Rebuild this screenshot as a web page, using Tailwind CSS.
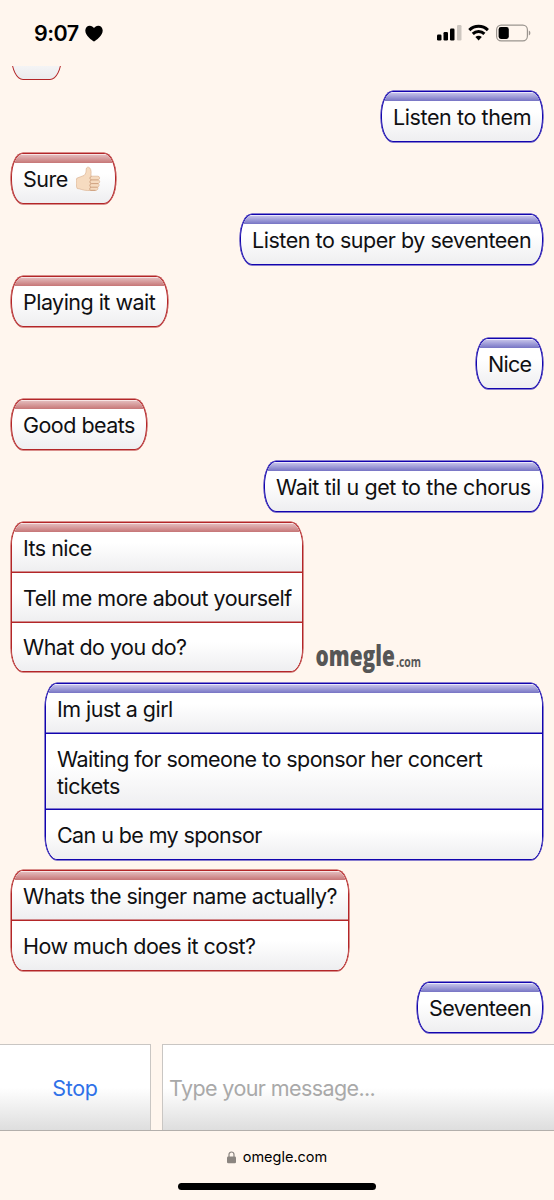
<!DOCTYPE html>
<html lang="en">
<head>
<meta charset="utf-8">
<title>omegle.com</title>
<script src="https://cdn.jsdelivr.net/npm/@tailwindcss/browser@4"></script>
</head>
<body class="w-[554px] h-[1200px] overflow-hidden bg-[#fff6ee] text-[#101012] font-['Inter','Liberation_Sans',sans-serif]">
<div class="relative flex h-[1200px] flex-col">
  <!-- status bar -->
  <header class="flex h-[66px] shrink-0 items-center justify-between pl-[34px] pr-[23px] text-black">
    <div class="flex items-center gap-[6px]">
      <span class="w-[45px] whitespace-nowrap text-[21.5px] font-semibold leading-[26px] tracking-[-0.5px]">9:07</span>
      <svg class="h-[17px] w-[18px]" viewBox="0 0 18 17"><path d="M9 16.6C7 15.500 0.300 10.800 0.300 5.600C0.300 2.700 2.300.7 4.800.7C6.600.7 8.100 1.600 9 3.100C9.900 1.600 11.400.7 13.200.7C15.700.7 17.700 2.700 17.700 5.600C17.700 10.800 11 15.500 9 16.600Z"/></svg>
    </div>
    <svg class="h-[18px] w-[95px]" viewBox="0 0 95 18">
      <rect x="1" y="10.500" width="4.500" height="6" rx="1.200"/>
      <rect x="7.500" y="8" width="4.500" height="8.500" rx="1.200"/>
      <rect x="14" y="4.500" width="4.500" height="12" rx="1.200"/>
      <rect x="21" y="1" width="4.500" height="15.500" rx="1.200" fill="#cdc6bf"/>
      <g fill="none" stroke="#000" stroke-width="3"><path d="M33.300 6.100A13.400 13.400 0 0 1 51.900 6.100"/><path d="M36.800 9.900A8.300 8.300 0 0 1 48.400 9.900"/></g>
      <path d="M39.400 13.100A4.600 4.600 0 0 1 45.800 13.100L42.600 16.500Z"/>
      <rect x="60.600" y="1.100" width="30.800" height="15.800" rx="4.600" fill="none" stroke="#9b958f" stroke-width="1.200"/>
      <rect x="62.600" y="3.100" width="10.200" height="11.800" rx="2.300"/>
      <path d="M92.800 6.500C94.900 7.200 94.900 10.800 92.800 11.500Z" fill="#9b958f"/>
    </svg>
  </header>

  <!-- conversation -->
  <main class="flex h-[978px] shrink-0 flex-col items-start overflow-hidden px-[11px] text-[21.5px] leading-[27px] tracking-[-0.53px]">
    <div class="flex h-[14px] w-[51px] shrink-0 flex-col justify-end overflow-hidden">
      <div class="h-[51px] w-[51px] shrink-0 rounded-[12px/24px] border border-[#b32628] bg-linear-to-b from-white from-40% to-[#ebebed]"></div>
    </div>

    <div class="relative mt-[11px] h-[51px] w-[162px] shrink-0 self-end overflow-hidden rounded-[12px/24px] border border-[#1204ae] bg-linear-to-b from-white from-40% to-[#eeeef0] pl-[11px] pt-[12px] whitespace-nowrap tracking-[-0.4px] shadow-[0_0_0_0.5px_#1204ae]">
      <div class="absolute inset-x-0 top-0 h-[9px] border-t border-[#e9e8fb] bg-linear-to-b from-[#c4c1e8] to-[#7774c4]"></div><span>Listen to them</span>
    </div>
    <div class="relative mt-[11px] flex h-[51px] w-[105px] shrink-0 overflow-hidden rounded-[12px/24px] border border-[#b32628] bg-linear-to-b from-white from-40% to-[#eeeef0] pl-[11px] pt-[12px] whitespace-nowrap shadow-[0_0_0_0.5px_#b32628]">
      <div class="absolute inset-x-0 top-0 h-[9px] border-t border-[#f7e4e4] bg-linear-to-b from-[#e2babb] to-[#c67677]"></div><span class="w-[53px]">Sure</span>
      <svg class="h-[27px] w-[25px]" viewBox="0 0 25 27"><path d="M.8 12.200C3 11 6 10.600 8 9.500C10 7.800 10.200 5.500 10.200 3.200C10.200 1.200 12.200.6 13.600 1.800C15.500 3.600 15.200 7 14.800 10.200H21.800C24 10.200 24.200 13.200 22.500 13.900C24.200 14.500 24 17 22.300 17.600C23.600 18.500 23.300 20.600 21.600 21.200C22.500 22.300 21.700 24.500 19.500 24.500H11.500C7 24.500 4.500 22.700 1.200 22.500C-.1 20.500-.1 14 .8 12.200Z" fill="#f6dbc0" stroke="#dcb593" stroke-width=".7"/><path d="M22.500 13.900H15.500C13.500 13.600 13.500 10.800 15.500 10.300M22.300 17.600H15.200C13.400 17.200 13.500 14.400 15.500 13.900M21.600 21.200H15C13.400 20.800 13.500 18 15.200 17.600M19.500 24.300H14.500C13.300 23.500 13.700 21.500 15 21.200" fill="none" stroke="#c99b78" stroke-width=".9"/></svg>
    </div>
    <div class="relative mt-[10px] h-[51px] w-[303px] shrink-0 self-end overflow-hidden rounded-[12px/24px] border border-[#1204ae] bg-linear-to-b from-white from-40% to-[#eeeef0] pl-[11px] pt-[12px] whitespace-nowrap tracking-[-0.47px] shadow-[0_0_0_0.5px_#1204ae]">
      <div class="absolute inset-x-0 top-0 h-[9px] border-t border-[#e9e8fb] bg-linear-to-b from-[#c4c1e8] to-[#7774c4]"></div><span>Listen to super by seventeen</span>
    </div>
    <div class="relative mt-[11px] h-[51px] w-[157px] shrink-0 overflow-hidden rounded-[12px/24px] border border-[#b32628] bg-linear-to-b from-white from-40% to-[#eeeef0] pl-[11px] pt-[12px] whitespace-nowrap shadow-[0_0_0_0.5px_#b32628]">
      <div class="absolute inset-x-0 top-0 h-[9px] border-t border-[#f7e4e4] bg-linear-to-b from-[#e2babb] to-[#c67677]"></div><span>Playing it wait</span>
    </div>
    <div class="relative mt-[11px] h-[51px] w-[67px] shrink-0 self-end overflow-hidden rounded-[12px/24px] border border-[#1204ae] bg-linear-to-b from-white from-40% to-[#eeeef0] pl-[11px] pt-[12px] whitespace-nowrap tracking-[-0.7px] shadow-[0_0_0_0.5px_#1204ae]">
      <div class="absolute inset-x-0 top-0 h-[9px] border-t border-[#e9e8fb] bg-linear-to-b from-[#c4c1e8] to-[#7774c4]"></div><span>Nice</span>
    </div>
    <div class="relative mt-[10px] h-[51px] w-[136px] shrink-0 overflow-hidden rounded-[12px/24px] border border-[#b32628] bg-linear-to-b from-white from-40% to-[#eeeef0] pl-[11px] pt-[12px] whitespace-nowrap shadow-[0_0_0_0.5px_#b32628]">
      <div class="absolute inset-x-0 top-0 h-[9px] border-t border-[#f7e4e4] bg-linear-to-b from-[#e2babb] to-[#c67677]"></div><span>Good beats</span>
    </div>
    <div class="relative mt-[11px] h-[51px] w-[279px] shrink-0 self-end overflow-hidden rounded-[12px/24px] border border-[#1204ae] bg-linear-to-b from-white from-40% to-[#eeeef0] pl-[11px] pt-[12px] whitespace-nowrap tracking-[-0.39px] shadow-[0_0_0_0.5px_#1204ae]">
      <div class="absolute inset-x-0 top-0 h-[9px] border-t border-[#e9e8fb] bg-linear-to-b from-[#c4c1e8] to-[#7774c4]"></div><span>Wait til u get to the chorus</span>
    </div>

    <div class="relative mt-[10px] h-[150px] w-[292px] shrink-0 overflow-hidden rounded-[12px/24px] border border-[#b32628] whitespace-nowrap shadow-[0_0_0_0.5px_#b32628]">
      <div class="absolute inset-x-0 top-0 h-[9px] border-t border-[#f7e4e4] bg-linear-to-b from-[#e2babb] to-[#c67677]"></div>
      <p class="h-[49px] bg-linear-to-b from-white from-40% to-[#eeeef0] pl-[11px] pt-[12px]">Its nice</p>
      <p class="h-[50px] border-t border-[#b32628] bg-linear-to-b from-white from-40% to-[#eeeef0] pl-[11px] pt-[12px] shadow-[0_-0.5px_0_#b32628]">Tell me more about yourself</p>
      <p class="h-[49px] border-t border-[#b32628] bg-linear-to-b from-white from-40% to-[#eeeef0] pl-[11px] pt-[11px] shadow-[0_-0.5px_0_#b32628]">What do you do?</p>
    </div>
    <div class="relative mt-[11px] h-[177px] w-[498px] shrink-0 self-end overflow-hidden rounded-[12px/24px] border border-[#1204ae] whitespace-nowrap shadow-[0_0_0_0.5px_#1204ae]">
      <div class="absolute inset-x-0 top-0 h-[9px] border-t border-[#e9e8fb] bg-linear-to-b from-[#c4c1e8] to-[#7774c4]"></div>
      <p class="h-[49px] bg-linear-to-b from-white from-40% to-[#eeeef0] pl-[11px] pt-[12px]">Im just a girl</p>
      <p class="h-[76px] border-t border-[#1204ae] bg-linear-to-b from-white from-40% to-[#eeeef0] pl-[11px] pt-[12px] shadow-[0_-0.5px_0_#1204ae]">Waiting for someone to sponsor her concert<br>tickets</p>
      <p class="h-[50px] border-t border-[#1204ae] bg-linear-to-b from-white from-40% to-[#eeeef0] pl-[11px] pt-[12px] tracking-[-0.6px] shadow-[0_-0.5px_0_#1204ae]">Can u be my sponsor</p>
    </div>
    <div class="relative mt-[10px] h-[101px] w-[338px] shrink-0 overflow-hidden rounded-[12px/24px] border border-[#b32628] whitespace-nowrap tracking-[-0.5px] shadow-[0_0_0_0.5px_#b32628]">
      <div class="absolute inset-x-0 top-0 h-[9px] border-t border-[#f7e4e4] bg-linear-to-b from-[#e2babb] to-[#c67677]"></div>
      <p class="h-[49px] bg-linear-to-b from-white from-40% to-[#eeeef0] pl-[11px] pt-[12px]">Whats the singer name actually?</p>
      <p class="h-[50px] border-t border-[#b32628] bg-linear-to-b from-white from-40% to-[#eeeef0] pl-[11px] pt-[12px] shadow-[0_-0.5px_0_#b32628]">How much does it cost?</p>
    </div>
    <div class="relative mt-[11px] h-[51px] w-[126px] shrink-0 self-end overflow-hidden rounded-[12px/24px] border border-[#1204ae] bg-linear-to-b from-white from-40% to-[#eeeef0] pl-[11px] pt-[12px] whitespace-nowrap tracking-[-0.6px] shadow-[0_0_0_0.5px_#1204ae]">
      <div class="absolute inset-x-0 top-0 h-[9px] border-t border-[#e9e8fb] bg-linear-to-b from-[#c4c1e8] to-[#7774c4]"></div><span>Seventeen</span>
    </div>
  </main>

  <!-- watermark -->
  <svg class="absolute left-[314px] top-[640px] h-[40px] w-[110px] overflow-visible font-['Open_Sans','Noto_Sans',sans-serif]" viewBox="0 0 110 40" fill="#565656">
    <text transform="translate(1.5 26) scale(.745 1)" font-size="28" font-weight="800">omegle</text>
    <text transform="translate(82 27) scale(.72 1)" font-size="14.500" font-weight="700">.com</text>
  </svg>

  <!-- composer -->
  <div class="flex h-[87px] shrink-0 gap-[11px] border-b border-[#b3afab] text-[21.5px]">
    <div class="flex w-[151px] items-center justify-center border-r border-t border-[#c9c6c3] bg-linear-to-b from-white from-50% to-[#dedede] pt-[2px] text-[#2f71e8]"><span class="tracking-[-0.3px]">Stop</span></div>
    <div class="flex flex-1 items-center border-l border-t border-[#c9c6c3] bg-linear-to-b from-white from-50% to-[#dedede] pl-[6px] pt-[2px] text-[#a9a9a9]"><span class="tracking-[-0.6px]">Type your message...</span></div>
  </div>

  <!-- browser address bar -->
  <footer class="flex flex-1 flex-col items-center">
    <div class="mt-[16px] flex h-[20px] items-center gap-[7px] text-[14.500px] text-black">
      <svg class="h-[13px] w-[9px]" viewBox="0 0 9 13"><rect y="5.500" width="9" height="6.800" rx="1.300" fill="#8b8580"/><path d="M2 6V3.500A2.500 2.500 0 0 1 7 3.500V6" fill="none" stroke="#8b8580" stroke-width="1.200"/></svg>
      <span>omegle.com</span>
    </div>
    <div class="mt-[16px] h-[7px] w-[198px] rounded-full bg-black"></div>
  </footer>
</div>
</body>
</html>
